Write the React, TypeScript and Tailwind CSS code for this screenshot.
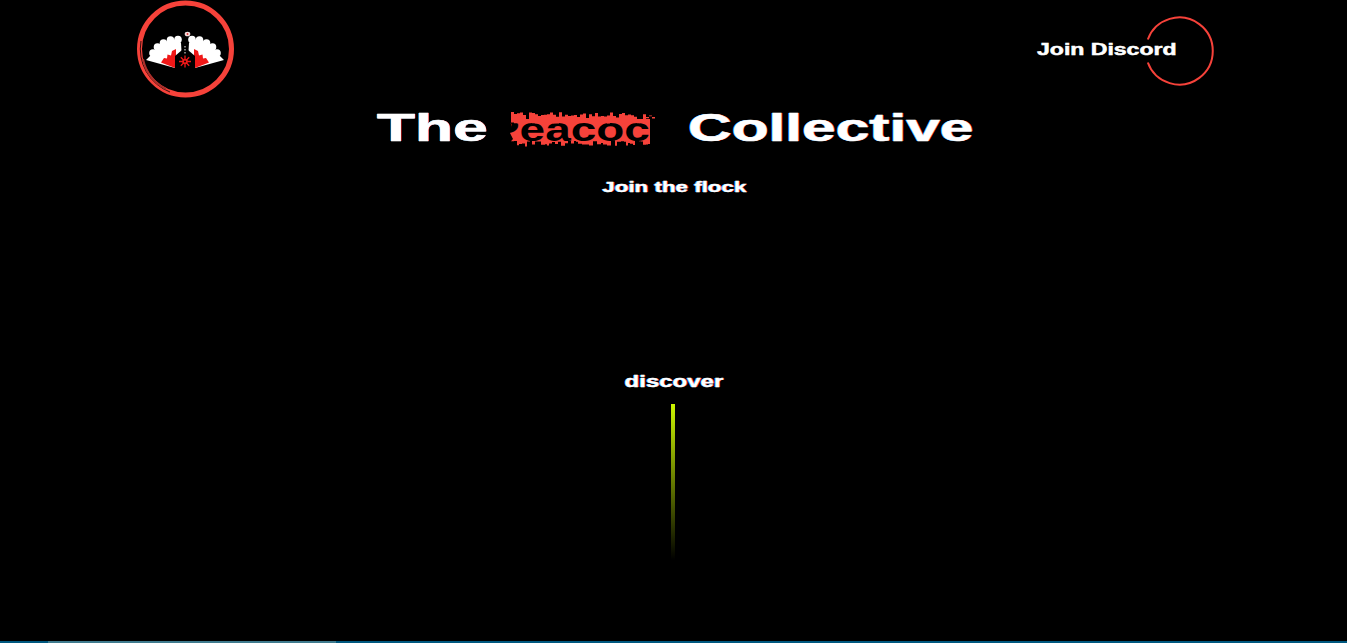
const font = "font-['Liberation_Sans',Arial,sans-serif] font-bold";
const aberr = "[text-shadow:-0.6px_0_0_#19a7ff,0.6px_0_0_#ff2a2a]";
const heavy = "[-webkit-text-stroke:0.5px_#ffffff]";

function rng(start: number) {
  let seed = start;
  return () => {
    seed = (seed * 16807) % 2147483647;
    return seed / 2147483647;
  };
}

// Red band behind the word, with a toothed lower edge.
function lowerBlob() {
  const r = rng(11);
  let d = "M3 10 L140 10";
  let x = 140;
  while (x > 3) {
    const w = 2 + Math.floor(r() * 3);
    const b = r() > 0.4 ? 34 + r() * 3.5 : 31 + r() * 2;
    d += ` L${x} ${b.toFixed(1)} L${x - w} ${b.toFixed(1)}`;
    x -= w;
  }
  return d + " L3 30 L0 24 L2 18 L0 12 Z";
}

// Red band over the top of the word, toothed on both edges.
function upperBlob() {
  const r = rng(23);
  let d = "M1 9";
  for (let x = 1; x < 145; x += 3) {
    const top = 3 + r() * 5 + (r() > 0.8 ? 3 : 0) + (x > 125 ? r() * 5 : 0);
    d += ` L${x} ${top.toFixed(1)} L${x + 3} ${top.toFixed(1)}`;
  }
  for (let x = 145; x > 1; x -= 3) {
    const b = 13 + r() * 1.6 - (x > 138 ? 6 : 0);
    d += ` L${x} ${b.toFixed(1)} L${x - 3} ${b.toFixed(1)}`;
  }
  return d + " Z";
}

const tips = [
  { x: 33, y: 54 },
  { x: 37.5, y: 48 },
  { x: 43.5, y: 44 },
  { x: 50.5, y: 41 },
  { x: 58, y: 40.5 },
];

function Wing() {
  return (
    <g>
      <path d="M55 69 L26 61 L33 54 L37.5 48 L43.5 44 L50.5 41 L58 40.5 L61 44 L62 60 Z" fill="#ffffff" />
      {tips.map((t, i) => (
        <circle key={i} cx={t.x} cy={t.y} r="3.8" fill="#ffffff" />
      ))}
      <path d="M55 69 L41 63.5 L44 59 L47 59.5 L47.5 55.5 L51 56.5 L52 52 L56 50 L56 69 Z" fill="#f01818" />
    </g>
  );
}

function Logo() {
  return (
    <svg width="130" height="105" viewBox="0 0 130 105" className="-ml-[17px] block shrink-0">
      <circle cx="65.5" cy="50" r="46" fill="none" stroke="#f6423a" strokeWidth="5" />
      <path d="M21 42 A46 46 0 0 0 50 93" fill="none" stroke="#000000" strokeWidth="0.8" />
      <path d="M23 60 A44 44 0 0 0 46 90" fill="none" stroke="#a82f2a" strokeWidth="2" />
      <Wing />
      <g transform="matrix(-1 0 0 1 130 0)">
        <Wing />
      </g>
      <path d="M55 69 L55 57 L65 48.5 L75 57 L75 69 Z" fill="#000" />
      <path d="M65 47 V56" stroke="#9a9a9a" strokeWidth="1.6" strokeDasharray="1.5 1.5" />
      <g stroke="#f01818" strokeWidth="1.3">
        <path d="M59 62.5 H71 M65 56.5 V68.5 M60.8 58.3 L69.2 66.7 M69.2 58.3 L60.8 66.7" />
      </g>
      <circle cx="65" cy="62.5" r="2.8" fill="#f01818" />
      <circle cx="65" cy="62.5" r="1" fill="#000" />
      <ellipse cx="67.5" cy="35" rx="2.8" ry="2.3" fill="#f4dcdc" />
      <circle cx="67.5" cy="35" r="0.9" fill="#e03030" />
    </svg>
  );
}

export default function App() {
  return (
    <div className={`flex h-screen w-full flex-col overflow-hidden bg-black text-white ${font}`}>
      <header className="flex h-[102px] shrink-0 items-center justify-between pl-[137px] pr-[133px]">
        <Logo />
        <div className="relative flex h-[70px] w-[177px] items-center">
          <svg width="70" height="70" viewBox="0 0 70 70" className="absolute right-0 top-0">
            <path d="M3.8 23.5 A33.5 33.5 0 1 1 3.8 46.5" fill="none" stroke="#f6423a" strokeWidth="2" />
          </svg>
          <span className={`relative -mt-[2px] inline-block origin-left scale-x-[1.44] whitespace-nowrap text-[16px] leading-none ${heavy}`}>
            Join Discord
          </span>
        </div>
      </header>

      <h1 className={`mt-[1px] flex h-[50px] shrink-0 items-center pl-[377px] text-[38px] leading-none ${aberr}`}>
        <span className="w-[133px] shrink-0">
          <span className={`inline-block origin-left scale-x-[1.64] ${heavy}`}>The</span>
        </span>
        <span className="relative flex h-[38px] w-[147px] shrink-0 items-center overflow-hidden [text-shadow:none]">
          <svg width="147" height="38" viewBox="0 0 147 38" className="absolute left-0 top-0">
            <path d={lowerBlob()} fill="#f6423a" />
          </svg>
          <span className="relative -ml-[21px] mt-[2px] inline-block origin-left scale-x-[1.35] whitespace-nowrap text-[34px] font-bold text-black">
            Peacock
          </span>
          <svg width="147" height="38" viewBox="0 0 147 38" className="absolute left-0 top-0">
            <path d={upperBlob()} fill="#f6423a" />
          </svg>
        </span>
        <span className="ml-[31px] shrink-0">
          <span className={`inline-block origin-left scale-x-[1.59] ${heavy}`}>Collective</span>
        </span>
      </h1>

      <div className={`mt-[25px] flex shrink-0 justify-center pl-[2px] text-[15px] leading-[18px] ${aberr}`}>
        <span className="inline-block scale-x-[1.49] whitespace-nowrap [-webkit-text-stroke:0.3px_#ffffff]">Join the flock</span>
      </div>

      <div className={`mt-[177px] flex shrink-0 justify-center pl-[1px] text-[16px] leading-[18px] ${aberr}`}>
        <span className="inline-block scale-x-[1.5] whitespace-nowrap [-webkit-text-stroke:0.3px_#ffffff]">discover</span>
      </div>

      <div className="mt-[13px] flex shrink-0 justify-center pr-[2px]">
        <div className="h-[156px] w-[4px] bg-linear-to-b from-[#ccf500] to-transparent" />
      </div>

      <div className="mt-auto flex h-[2px] shrink-0 bg-[#00587f]">
        <div className="ml-[48px] h-full w-[288px] bg-[#3f7b8e]" />
      </div>
    </div>
  );
}
